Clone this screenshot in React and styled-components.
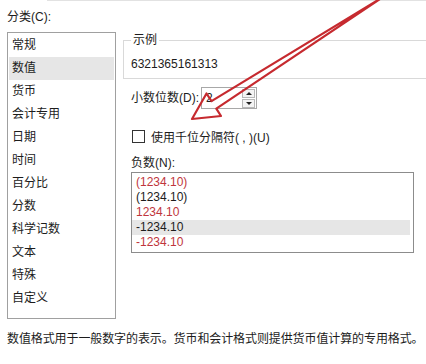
import styled, { createGlobalStyle } from "styled-components";

const GlobalStyle = createGlobalStyle`
    body {
        margin: 0;
        background: #fff;
        font-family: "Liberation Sans", "Noto Sans CJK SC", sans-serif;
        font-size: 12px;
        color: #1c1c1c;
    }
`

const categories = ["常规", "数值", "货币", "会计专用", "日期", "时间", "百分比", "分数", "科学记数", "文本", "特殊", "自定义"]

const negatives = [
    {text: "(1234.10)", red: true},
    {text: "(1234.10)"},
    {text: "1234.10", red: true},
    {text: "-1234.10", selected: true},
    {text: "-1234.10", red: true},
]

const Page = styled.div`
    position: relative;
    width: 426px;
    height: 364px;
    overflow: hidden;
`

const TopRule = styled.div`
    height: 1px;
    margin-left: 47px;
    background: #e2e2e2;
`

const Label = styled.div`
    height: 16px;
    line-height: 16px;
    white-space: nowrap;
`

const CategoryLabel = styled(Label)`
    padding: 8px 0 7px 7px;
`

const Main = styled.div`
    display: flex;
    align-items: flex-start;
`

const ListBox = styled.div`
    box-sizing: border-box;
    width: 109px;
    height: 287px;
    margin-left: 7px;
    padding: 1px;
    border: 1px solid #a0a0a0;
`

const CategoryItem = styled.div`
    height: 23px;
    line-height: 22px;
    padding-left: 3px;
    background: ${p => p.$selected ? "#e6e6e6" : "transparent"};
`

const RightCol = styled.div`
    flex: 1;
    margin-left: 7px;
`

const Sample = styled.fieldset`
    margin: 0;
    padding: 8px 0 6px 7px;
    border: 1px solid #d9d9d9;
    border-right: none;
    legend {
        margin-left: 0;
        padding: 0 2px;
        height: 16px;
        line-height: 16px;
    }
`

const DecimalRow = styled.div`
    display: flex;
    align-items: center;
    margin-top: 8px;
    padding-left: 8px;
    gap: 2px;
`

const Spinner = styled.div`
    box-sizing: border-box;
    display: flex;
    align-items: center;
    justify-content: space-between;
    width: 56px;
    height: 22px;
    padding: 0 1px 0 4px;
    border: 1px solid #a8a8a8;
`

const SpinButtons = styled.div`
    display: flex;
    flex-direction: column;
    gap: 1px;
`

const SpinButton = styled.div`
    box-sizing: border-box;
    display: flex;
    align-items: center;
    justify-content: center;
    width: 13px;
    height: 9px;
    border: 1px solid #b8b8b8;
    background: #f4f4f4;
    &::after {
        content: "";
        border-left: 3px solid transparent;
        border-right: 3px solid transparent;
        ${p => p.$down ? "border-top: 3px solid #222;" : "border-bottom: 3px solid #222;"}
    }
`

const CheckRow = styled.label`
    display: flex;
    align-items: center;
    gap: 6px;
    margin-top: 19px;
    padding-left: 9px;
    height: 16px;
`

const CheckBox = styled.span`
    box-sizing: border-box;
    width: 13px;
    height: 13px;
    border: 1px solid #333;
    background: #fff;
`

const NegLabel = styled(Label)`
    margin-top: 11px;
    padding-left: 8px;
`

const NegList = styled.div`
    box-sizing: border-box;
    width: 283px;
    height: 81px;
    margin: 1px 0 0 8px;
    padding: 2px 3px 0 0;
    border: 1px solid #8c8c8c;
`

const NegItem = styled.div`
    height: 15px;
    line-height: 15px;
    padding-left: 4px;
    color: ${p => p.$red ? "#c0353c" : "#1c1c1c"};
    background: ${p => p.$selected ? "#e6e6e6" : "transparent"};
`

const Description = styled(Label)`
    margin-top: 12px;
    padding-left: 7px;
    font-size: 12px;
    letter-spacing: -0.1px;
`

const Arrow = styled.svg`
    position: absolute;
    left: 0;
    top: 0;
    pointer-events: none;
`

export default function App() {
    return (
        <>
            <GlobalStyle/>
            <Page>
                <TopRule/>
                <CategoryLabel>分类(C):</CategoryLabel>
                <Main>
                    <ListBox>
                        {categories.map(c => (
                            <CategoryItem key={c} $selected={c === "数值"}>{c}</CategoryItem>
                        ))}
                    </ListBox>
                    <RightCol>
                        <Sample>
                            <legend>示例</legend>
                            <Label>6321365161313</Label>
                        </Sample>
                        <DecimalRow>
                            <Label>小数位数(D):</Label>
                            <Spinner>
                                <span>2</span>
                                <SpinButtons>
                                    <SpinButton/>
                                    <SpinButton $down/>
                                </SpinButtons>
                            </Spinner>
                        </DecimalRow>
                        <CheckRow>
                            <CheckBox/>
                            <span>使用千位分隔符( , )(U)</span>
                        </CheckRow>
                        <NegLabel>负数(N):</NegLabel>
                        <NegList>
                            {negatives.map((n, i) => (
                                <NegItem key={i} $red={n.red} $selected={n.selected}>{n.text}</NegItem>
                            ))}
                        </NegList>
                    </RightCol>
                </Main>
                <Description>数值格式用于一般数字的表示。货币和会计格式则提供货币值计算的专用格式。</Description>
                {/* red annotation arrow drawn over the dialog */}
                <Arrow width="426" height="364" viewBox="0 0 426 364">
                    <polygon
                        points="192,119 221,116 216.3,108.7 383,-3 211.5,101.1 206.5,93.5"
                        fill="none"
                        stroke="#c62a2f"
                        strokeWidth="2.2"
                        strokeLinejoin="round"
                    />
                </Arrow>
            </Page>
        </>
    )
}
